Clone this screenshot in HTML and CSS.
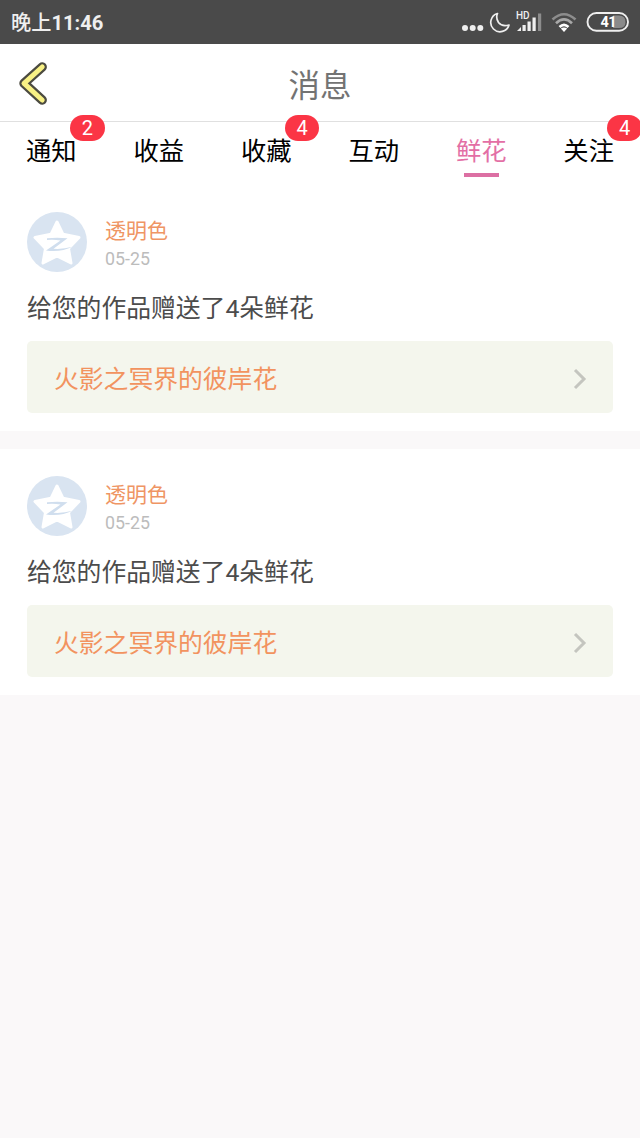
FILE: index.html
```html
<!DOCTYPE html>
<html lang="zh-CN">
<head>
<meta charset="utf-8">
<title>消息</title>
<link rel="stylesheet" href="styles.css">
</head>
<body>
<svg width="0" height="0" class="defs">
  <symbol id="star" viewBox="0 0 60 60">
    <circle cx="30" cy="30" r="30" fill="#d9e4f1"/>
    <path d="M30 10L36 22.300L52 25.500L41.500 36.500L44 51L30 44L16 51L18.500 36.500L8 25.500L24 22.300Z" fill="#fff" stroke="#fff" stroke-width="3" stroke-linejoin="round"/>
    <path d="M20 26.300Q30 25 40.500 26.300L26.500 36.800Q36 37.500 45.500 34.800Q34 40.500 19 38.500L33.500 28.400Q27 27.500 20 28Z" fill="#d0deee"/>
  </symbol>
</svg>
<div class="status">
  <span class="time">晚上<b>11:46</b></span>
  <svg class="indicators" width="180" height="44" viewBox="460 0 180 44">
    <g fill="#efefef"><circle cx="465" cy="28" r="3"/><circle cx="472.700" cy="28" r="3"/><circle cx="480.300" cy="28" r="3"/></g>
    <path d="M497.500 13.500A9.300 9.300 0 1 0 509 25Q502 27 498.500 22.500Q495.500 18 497.500 13.500Z" fill="none" stroke="#efefef" stroke-width="1.700" stroke-linejoin="round"/>
    <text x="516" y="19" class="hd">HD</text>
    <g fill="#efefef"><path d="M517 31L521 27V31Z"/><rect x="522.500" y="25" width="3.200" height="6"/><rect x="527.500" y="21.500" width="3.200" height="9.500"/><rect x="532.500" y="17.500" width="3.200" height="13.500"/></g>
    <rect x="538" y="13.500" width="3.200" height="17.500" fill="#8d8d8d"/>
    <g fill="none" stroke-width="2.600"><path d="M552.500 19.500Q564 9 575.500 19.500" stroke="#8d8d8d"/><path d="M556 23.200Q564 15.500 572 23.200" stroke="#a8a8a8"/><path d="M559.500 27Q564 22.700 568.500 27" stroke="#fff"/></g>
    <path d="M560.800 28.500Q564 26.300 567.200 28.500L564 32Z" fill="#fff"/>
    <path d="M613 15.500H619Q625.500 15.500 625.500 22Q625.500 28 619 28H613Z" fill="#8a8a8a"/>
    <rect x="587.500" y="13" width="40.500" height="17.800" rx="8.900" fill="none" stroke="#efefef" stroke-width="1.900"/>
    <text x="600.500" y="27.200" class="battery">41</text>
  </svg>
</div>
<header class="header">
  <svg class="back" width="30" height="44" viewBox="0 0 30 44" fill="none" stroke-linecap="round" stroke-linejoin="round"><path d="M23.200 6L5 22.300L23.200 39" stroke="#4c4b40" stroke-width="9.400"/><path d="M23.200 6L5 22.300L23.200 39" stroke="#f8f185" stroke-width="5"/></svg>
  <h1 class="title">消息</h1>
</header>
<nav class="tabs">
  <a class="tab">通知<span class="badge">2</span></a>
  <a class="tab">收益</a>
  <a class="tab">收藏<span class="badge">4</span></a>
  <a class="tab">互动</a>
  <a class="tab active">鲜花</a>
  <a class="tab">关注<span class="badge">4</span></a>
</nav>
<main class="list">
  <article class="card">
    <div class="user">
      <svg class="avatar"><use href="#star"/></svg>
      <div class="meta"><span class="name">透明色</span><time class="date">05-25</time></div>
    </div>
    <p class="message">给您的作品赠送了4朵鲜花</p>
    <a class="work"><span>火影之冥界的彼岸花</span><svg width="14" height="22" viewBox="0 0 14 22"><path d="M2 2L11 11L2 20" fill="none" stroke="#c4c5bf" stroke-width="3"/></svg></a>
  </article>
  <article class="card">
    <div class="user">
      <svg class="avatar"><use href="#star"/></svg>
      <div class="meta"><span class="name">透明色</span><time class="date">05-25</time></div>
    </div>
    <p class="message">给您的作品赠送了4朵鲜花</p>
    <a class="work"><span>火影之冥界的彼岸花</span><svg width="14" height="22" viewBox="0 0 14 22"><path d="M2 2L11 11L2 20" fill="none" stroke="#c4c5bf" stroke-width="3"/></svg></a>
  </article>
</main>
</body>
</html>
```
FILE: styles.css
```css
* { box-sizing: border-box; }
body {
  margin: 0;
  height: 1138px;
  overflow: hidden;
  background: #faf8f9;
  font-family: Roboto, "Noto Sans CJK SC", sans-serif;
}
.defs { position: absolute; }
.status {
  display: flex;
  justify-content: space-between;
  height: 44px;
  padding-left: 11px;
  background: #4a4a4a;
  color: #efefef;
}
.time { font-size: 20.2px; font-weight: 500; line-height: 47px; }
.time b { font-weight: 700; }
.hd { font-size: 10px; font-weight: 500; fill: #efefef; }
.battery { font-size: 14.5px; font-weight: 700; fill: #fff; letter-spacing: -0.5px; }
.header {
  display: grid;
  grid-template-columns: 60px 1fr 60px;
  align-items: center;
  height: 78px;
  border-bottom: 1px solid #e0e0e0;
  background: #fff;
}
.back { margin-left: 19px; }
.title {
  margin: 8px 0 0;
  font-size: 31.5px;
  font-weight: 400;
  line-height: 40px;
  text-align: center;
  color: #737373;
}
.tabs {
  display: flex;
  justify-content: space-between;
  height: 63px;
  padding: 10px 26px 0;
  background: #fff;
}
.tab {
  position: relative;
  height: 47px;
  font-size: 25.3px;
  line-height: 40px;
  color: #000;
}
.active { color: #e36fa5; }
.active::after {
  content: "";
  display: block;
  width: 35px;
  height: 4px;
  margin: 1px auto 0;
  background: #dc6fa3;
}
.badge {
  position: absolute;
  top: -17px;
  left: 44px;
  width: 34.5px;
  height: 26px;
  border-radius: 13px;
  background: #fb3545;
  color: #fff;
  font-size: 20px;
  line-height: 27px;
  text-align: center;
}
.list { display: flex; flex-direction: column; gap: 18px; }
.card { height: 246px; padding: 27px 27px 18px; background: #fff; }
.user { display: flex; gap: 18px; height: 60px; }
.avatar { width: 60px; height: 60px; }
.meta { display: flex; flex-direction: column; padding-top: 4px; }
.name { font-size: 21px; line-height: 30px; color: #ef9564; }
.date { margin-top: -1px; font-size: 17.8px; line-height: 28px; color: #bcbcbc; }
.message {
  margin: 17px 0 12px;
  font-size: 24.8px;
  line-height: 40px;
  color: #4c4c4c;
}
.work {
  display: flex;
  align-items: center;
  justify-content: space-between;
  height: 72px;
  padding: 4px 26px 0 27px;
  border-radius: 5px;
  background: #f4f6ed;
  color: #f2935f;
  font-size: 24.8px;
  line-height: 40px;
}
.work span { padding-top: 2px; }
```
